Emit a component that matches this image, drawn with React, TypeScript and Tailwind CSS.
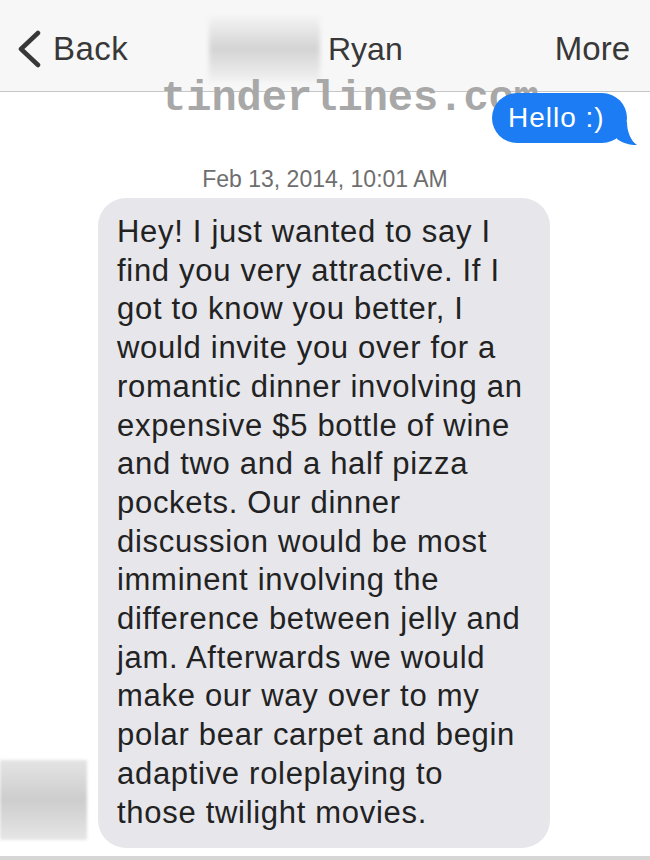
export default function App() {
  const lines = [
    "Hey! I just wanted to say I",
    "find you very attractive. If I",
    "got to know you better, I",
    "would invite you over for a",
    "romantic dinner involving an",
    "expensive $5 bottle of wine",
    "and two and a half pizza",
    "pockets. Our dinner",
    "discussion would be most",
    "imminent involving the",
    "difference between jelly and",
    "jam. Afterwards we would",
    "make our way over to my",
    "polar bear carpet and begin",
    "adaptive roleplaying to",
    "those twilight movies.",
  ];

  return (
    <div className="relative h-[860px] w-[650px] overflow-hidden bg-white font-['Liberation_Sans',Arial,sans-serif]">
      <header className="flex h-[92px] items-center border-b border-[#c6c6c6] bg-[#f7f7f7] pl-[17px] pr-[20px] pt-[6px]">
        <div className="flex w-[192px] items-center gap-[11px] text-[33px] leading-none text-[#383838]">
          <svg width="25" height="38" viewBox="0 0 25 38" fill="none" stroke="#383838" strokeWidth="4.5" strokeLinecap="round" strokeLinejoin="round">
            <path d="M21 3 L4 19 L21 35" />
          </svg>
          <span className="tracking-[0.5px]">Back</span>
        </div>
        <div className="h-[64px] w-[111px] bg-gradient-to-b from-[#f3f3f3] via-[#d4d4d4] to-[#f1f1f1] blur-[2px]" />
        <span className="ml-[8px] text-[32px] leading-none text-[#383838]">Ryan</span>
        <div className="flex-1" />
        <span className="text-[33px] leading-none text-[#383838]">More</span>
      </header>

      <div className="pointer-events-none absolute left-[161px] top-[78px] font-['Liberation_Mono','Courier_New',monospace] text-[42px] font-bold leading-none text-[#a8a8a8]">
        tinderlines.com
      </div>

      <main className="flex flex-col">
        <div className="flex justify-end pr-[23px]">
          <div className="relative z-10 mt-[1px] flex h-[50px] w-[135px] items-center rounded-[25px] bg-[#1c7cf4] pl-[16px] text-[28px] leading-none tracking-[1px] text-white">
            <svg className="absolute -bottom-[3px] -right-[12px]" width="22" height="24" viewBox="0 0 22 24">
              <path d="M0 0 L10 0 C10 10 14 19 20 23 C12 23 6 21 0 17 Z" fill="#1c7cf4" />
            </svg>
            <span className="relative">Hello :)</span>
          </div>
        </div>

        <div className="mt-[25px] text-center text-[23px] leading-none text-[#6e6e6e]">
          Feb 13, 2014, 10:01 AM
        </div>

        <div className="mt-[7px] flex items-end">
          <div className="mb-[8px] h-[80px] w-[87px] bg-gradient-to-b from-[#e4e4e4] via-[#cdcdcd] to-[#e6e6e6] blur-[1.5px]" />
          <div className="ml-[11px] w-[452px] rounded-[28px] bg-[#e6e6eb] pb-[16px] pl-[19px] pt-[15px] text-[31px] leading-[38.7px] tracking-[0.7px] text-[#222]">
            {lines.map((l) => (
              <div key={l} className="whitespace-nowrap">{l}</div>
            ))}
          </div>
        </div>
      </main>
      <div className="absolute bottom-0 left-0 h-[4px] w-full bg-[#d6d6d6]" />
    </div>
  );
}
